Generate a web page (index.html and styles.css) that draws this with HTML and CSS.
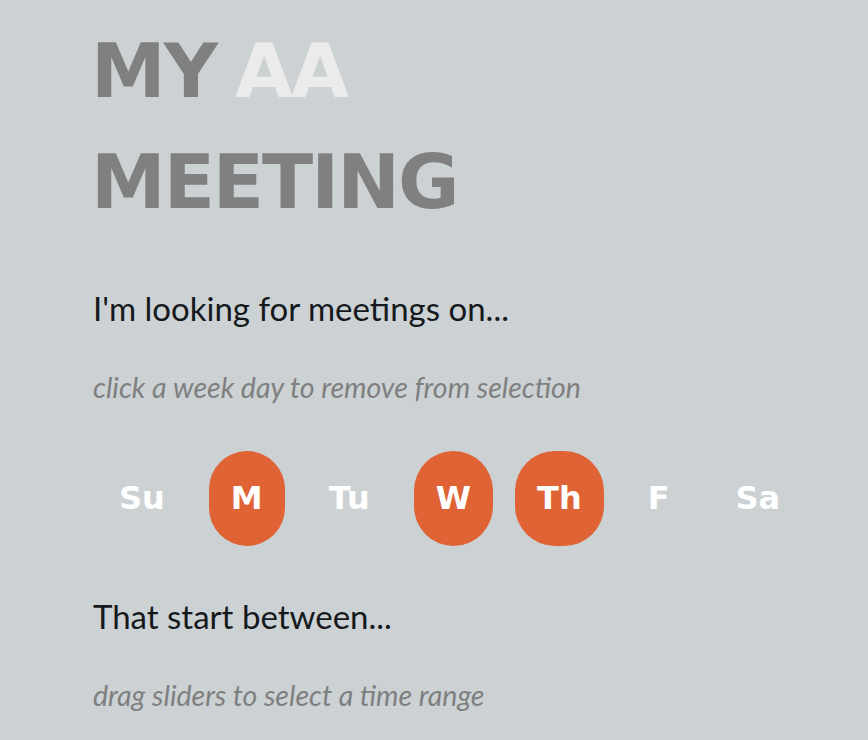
FILE: index.html
```
<!DOCTYPE html>
<html lang="en">
<head>
<meta charset="utf-8">
<title>My AA Meeting</title>
<link rel="stylesheet" href="styles.css">
</head>
<body>
<main class="page">
  <h1 class="title">MY <span class="title-accent">AA</span><br>MEETING</h1>
  <section class="block">
    <p class="prompt">I'm looking for meetings on...</p>
    <p class="hint">click a week day to remove from selection</p>
    <div class="days">
      <button class="day">Su</button>
      <button class="day is-on">M</button>
      <button class="day">Tu</button>
      <button class="day is-on">W</button>
      <button class="day is-on">Th</button>
      <button class="day">F</button>
      <button class="day">Sa</button>
    </div>
  </section>
  <section class="block block-time">
    <p class="prompt">That start between...</p>
    <p class="hint">drag sliders to select a time range</p>
  </section>
</main>
</body>
</html>
```
FILE: styles.css
```
html, body {
  margin: 0;
  padding: 0;
  background: #ccd1d4;
  height: 100%;
  overflow: hidden;
}
.page {
  padding: 16px 0 0 93px;
}
.title {
  margin: 0 0 0 -2px;
  font-family: "DejaVu Sans", sans-serif;
  font-weight: bold;
  font-size: 75px;
  line-height: 111px;
  letter-spacing: -2px;
  word-spacing: -5px;
  color: #808080;
}
.title-accent {
  color: #ebebeb;
}
.block {
  margin-top: 50px;
}
.prompt {
  margin: 0;
  font-family: Lato, sans-serif;
  font-size: 33px;
  line-height: 40px;
  color: #15191c;
}
.hint {
  margin: 42px 0 0;
  font-family: Lato, sans-serif;
  font-style: italic;
  font-size: 28.5px;
  line-height: 34px;
  color: #7f7f7f;
}
.days {
  display: flex;
  gap: 22px;
  margin: 47px 0 0 4px;
}
.day {
  height: 95px;
  padding: 0 22px 2px;
  border: 0;
  border-radius: 40px;
  background: transparent;
  font-family: "DejaVu Sans", sans-serif;
  font-weight: bold;
  font-size: 32px;
  color: #ffffff;
}
.day.is-on {
  background: #e06336;
}
.block-time {
  margin-top: 50px;
}
```
